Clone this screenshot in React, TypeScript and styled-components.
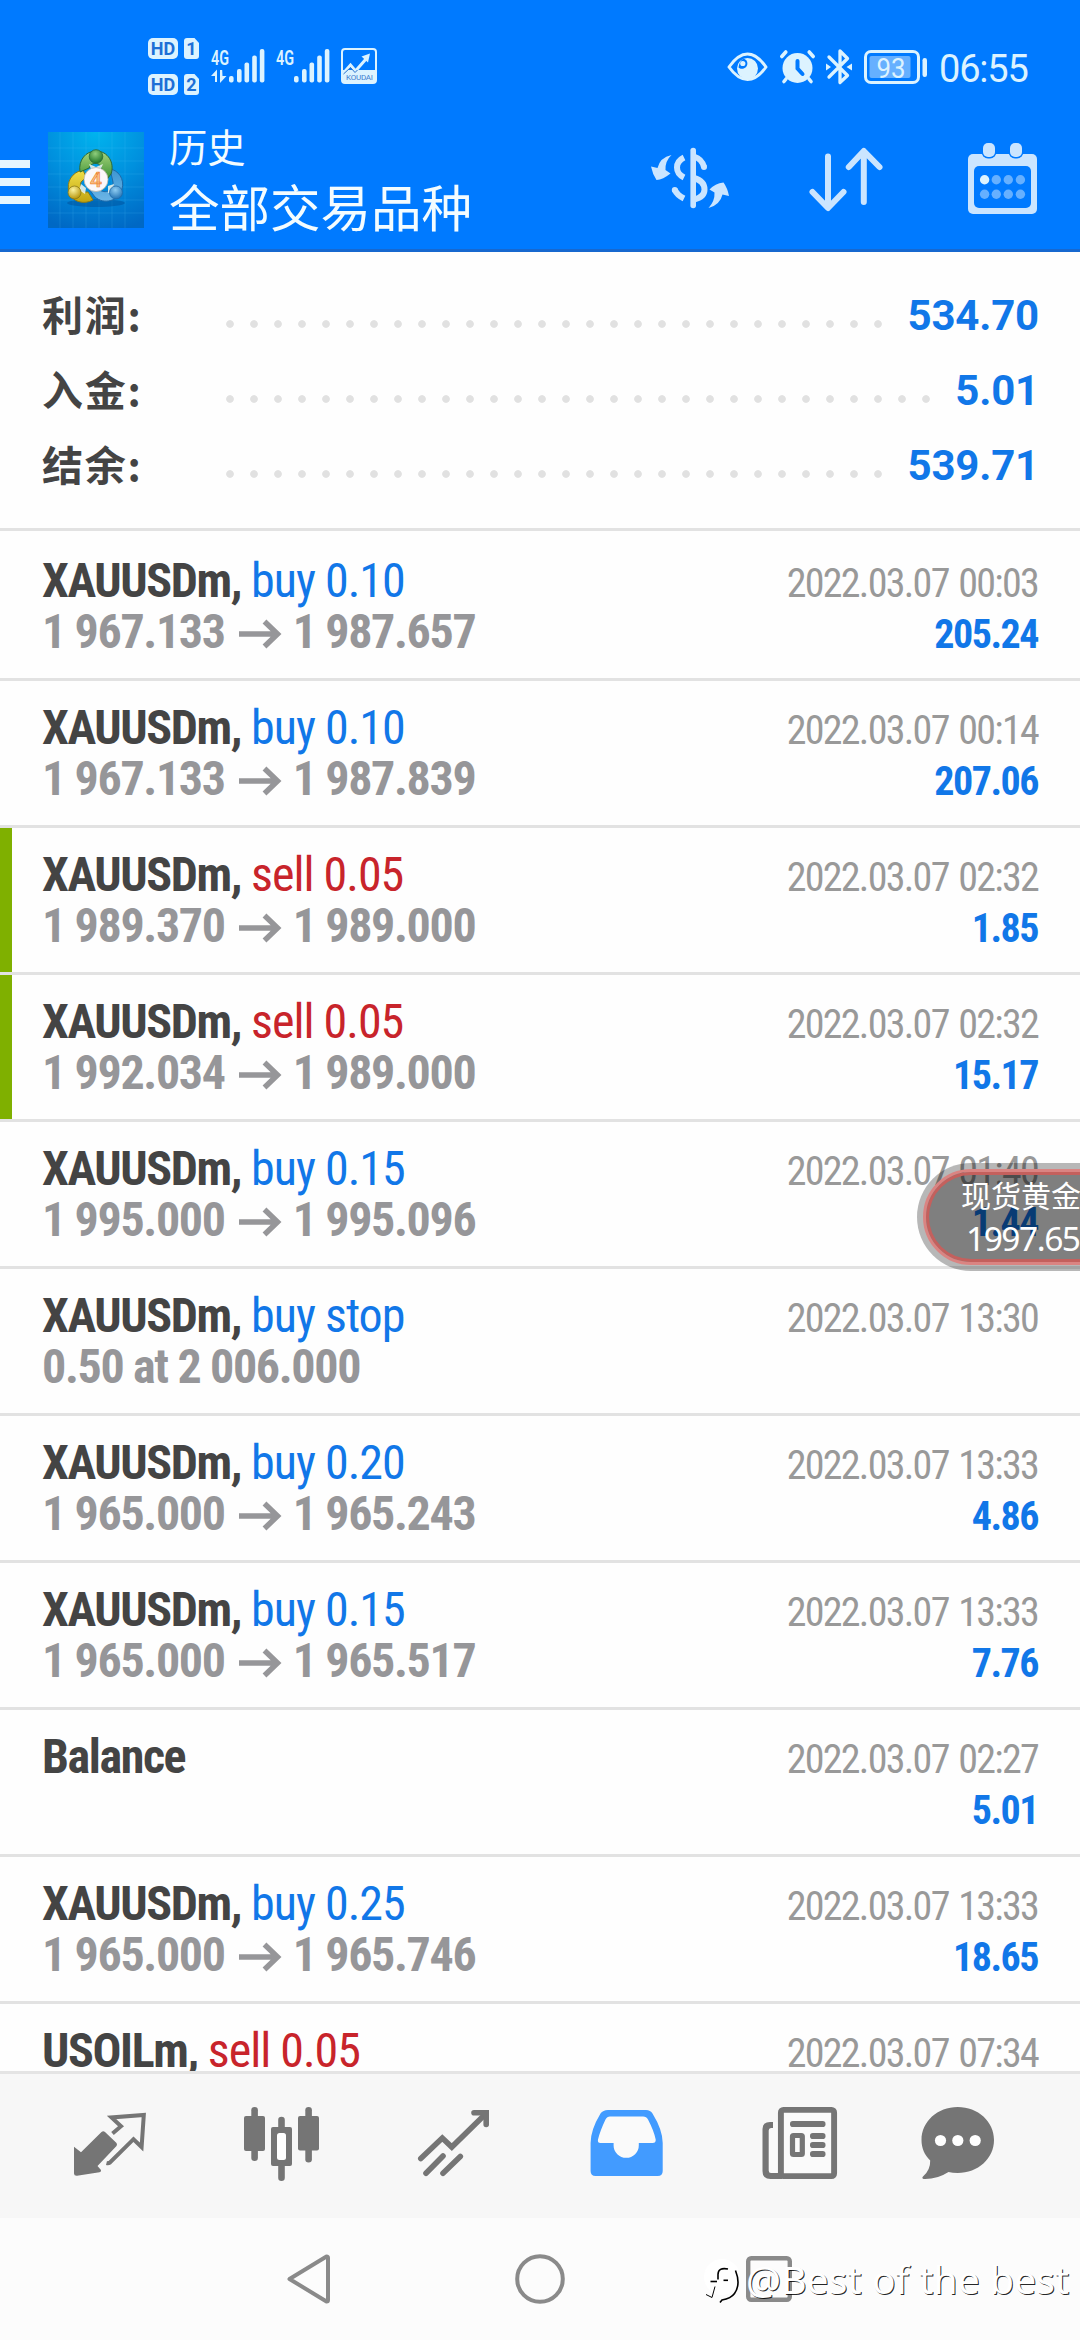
import React from "react";
import styled, { createGlobalStyle } from "styled-components";

const BLUE = "#007aff";
const ICE = "#dcf3ff";
const PALE = "#cbe5ff";
const GREY = "#757575";

const Global = createGlobalStyle`
  * { box-sizing: border-box; }
  body { margin: 0; background: #fff; }
  svg { display: block; flex: none; overflow: visible; }
`;

const Screen = styled.div`
  position: relative;
  display: flex;
  flex-direction: column;
  width: 1080px;
  height: 2340px;
  overflow: hidden;
  background: #fefefe;
  font-family: Roboto, "Noto Sans CJK SC", sans-serif;
`;

const Header = styled.header`
  flex: none;
  display: flex;
  flex-direction: column;
  height: 252px;
  background: ${BLUE};
  border-bottom: 3px solid #1768cf;
`;

const StatusBar = styled.div`
  display: flex;
  align-items: flex-start;
  justify-content: space-between;
  height: 124px;
  padding: 38px 51px 0 148px;
`;

const StatusLeft = styled.div`
  display: flex;
  align-items: flex-start;
`;

const HdColumn = styled.div`
  display: flex;
  flex-direction: column;
  gap: 15px;
`;

const HdRow = styled.div`
  display: flex;
  align-items: center;
  gap: 6px;
  height: 21px;
`;

const Badge = styled.span<{ $w: number; $cut?: boolean }>`
  display: flex;
  align-items: center;
  justify-content: center;
  width: ${(p) => p.$w}px;
  height: 21px;
  border-radius: ${(p) => (p.$cut ? "3px" : "5px")};
  background: ${ICE};
  color: #1d6fd6;
  font-size: 18px;
  font-weight: 700;
  line-height: 21px;
  clip-path: ${(p) => (p.$cut ? "polygon(0 0, 70% 0, 100% 24%, 100% 100%, 0 100%)" : "none")};
`;

const SignalGroup = styled.div`
  display: flex;
  align-items: center;
  gap: 11px;
  height: 34px;
  margin: 11px 0 0 12px;
`;

const StatusIcons = styled.div`
  display: flex;
  align-items: center;
  gap: 11.500px;
  height: 34px;
  margin-top: 12px;
`;

const Clock = styled.span`
  width: 90px;
  padding-top: 3px;
  color: ${ICE};
  font-size: 38px;
  line-height: 38px;
  letter-spacing: -1.2px;
  white-space: nowrap;
`;

const AppBar = styled.div`
  display: flex;
  align-items: flex-start;
  height: 125px;
  padding-right: 43px;
`;

const Burger = styled.button`
  display: flex;
  flex-direction: column;
  gap: 10px;
  width: 30px;
  margin: 36px 18px 0 0;
  padding: 0;
  border: 0;
  background: none;
`;

const BurgerLine = styled.span`
  height: 8px;
  background: #e6f6ff;
`;

const Logo = styled.div`
  width: 96px;
  height: 96px;
  margin-top: 8px;
`;

const Titles = styled.div`
  display: flex;
  flex-direction: column;
  margin: -2px 0 0 25px;
  color: #f3fcff;
  font-family: "Noto Sans CJK SC", sans-serif;
`;

const Caption = styled.span`
  font-size: 38.3px;
  line-height: 48px;
`;

const Title = styled.h1`
  margin: 0;
  font-size: 50.5px;
  font-weight: 400;
  line-height: 70px;
`;

const Actions = styled.div`
  display: grid;
  grid-template-columns: 79px 74px 69px;
  column-gap: 82px;
  align-items: start;
  margin: 19px 0 0 auto;

  svg:nth-child(-n + 2) {
    margin-top: 4px;
  }

  svg:nth-child(2) {
    margin-left: -3px;
  }
`;

const Summary = styled.section`
  flex: none;
  display: flex;
  flex-direction: column;
  height: 279px;
  padding: 26px 41px 0 42px;
  border-bottom: 3px solid #e2e2e2;
`;

const SummaryRow = styled.div`
  display: flex;
  align-items: center;
  height: 75px;
`;

const SummaryLabel = styled.span`
  width: 184px;
  padding-bottom: 5px;
  color: #444;
  font-family: "Noto Sans CJK SC", sans-serif;
  font-size: 41px;
  font-weight: 700;
  letter-spacing: 1.7px;
`;

const Dots = styled.div`
  flex: 1;
  height: 8px;
  margin: 16px 13px 0 0;
  background: radial-gradient(circle at 4px 4px, #e1e1e1 3.4px, transparent 4.2px) 0 0 / 24px 8px repeat-x;
`;

const SummaryValue = styled.span`
  color: #1177e8;
  font-size: 42px;
  font-weight: 700;
  letter-spacing: -0.2px;
`;

const History = styled.main`
  height: 1540px;
  overflow: hidden;
`;

const DealShell = styled.div<{ $first?: boolean }>`
  height: 147px;
  border-top: 3px solid ${(p) => (p.$first ? "transparent" : "#e2e2e2")};
`;

const DealBody = styled.div<{ $marked?: boolean }>`
  height: 144px;
  padding: 21px 42px 0 ${(p) => (p.$marked ? 30 : 42)}px;
  border-left: ${(p) => (p.$marked ? "12px solid #7fb000" : "0")};
`;

const Line = styled.div`
  display: flex;
  align-items: baseline;
  justify-content: space-between;
  height: 51px;
  font-family: "Roboto Condensed", Roboto, sans-serif;
  font-stretch: 75%;
  font-size: 48px;
  line-height: 51px;
  white-space: pre;
`;

const Symbol = styled.span`
  color: #444;
  font-weight: 700;
  letter-spacing: -1.4px;
`;

const Side = styled.span<{ $sell?: boolean }>`
  color: ${(p) => (p.$sell ? "#c8242b" : "#1177e8")};
  font-weight: 400;
  letter-spacing: -1px;
`;

const Prices = styled.span`
  display: flex;
  align-items: baseline;
  color: #969699;
  font-weight: 700;
  letter-spacing: -1.35px;
`;

const Arrow = styled.svg`
  margin: 0 12px 0 14px;
`;

const Time = styled.span`
  color: #999;
  font-size: 40px;
  letter-spacing: -1.7px;
  word-spacing: 2px;
`;

const Profit = styled.span`
  margin-left: auto;
  color: #1177e8;
  font-size: 40px;
  font-weight: 700;
  letter-spacing: -1.5px;
`;

const TabBar = styled.nav`
  flex: none;
  display: flex;
  align-items: flex-start;
  gap: 99px;
  height: 147px;
  padding: 33px 0 0 74px;
  border-top: 3px solid #e4e4e4;
  background: #f7f7f7;

  svg:last-child {
    margin-left: -15px;
  }
`;

const NavBar = styled.footer`
  flex: none;
  display: flex;
  align-items: center;
  gap: 183px;
  height: 122px;
  padding-left: 288px;
  background: #fcfcfc;
`;

const Ticker = styled.aside`
  position: absolute;
  left: 917px;
  top: 1163px;
  width: 220px;
  height: 108px;
  padding: 6px;
  border-radius: 54px;
  background: rgba(0, 0, 0, 0.28);
`;

const TickerGlow = styled.div`
  height: 96px;
  padding: 5px 0 0 35px;
  border: 3px solid #da8482;
  border-radius: 48px;
  background: rgba(0, 0, 0, 0.3);
  box-shadow: inset 0 0 0 3px #c4605d;
  color: #fff;
  white-space: nowrap;
`;

const TickerName = styled.div`
  font-family: "Noto Sans CJK SC", sans-serif;
  font-size: 30px;
  line-height: 34px;
`;

const TickerPrice = styled.div`
  padding-left: 5px;
  font-family: "Noto Sans", sans-serif;
  font-size: 33.5px;
  line-height: 54px;
  letter-spacing: -1.5px;
`;

const Watermark = styled.div`
  position: absolute;
  left: 704px;
  top: 2254px;
  display: flex;
  align-items: center;
  height: 50px;
  color: #fff;
  font-family: "Noto Sans", sans-serif;
  font-size: 39px;
  line-height: 50px;
  letter-spacing: 0.1px;
  white-space: pre;
  text-shadow: 1px 1px 0.5px rgba(0, 0, 0, 0.85);
`;

type DealData = {
  symbol: string;
  side?: string;
  sell?: boolean;
  from?: string;
  to?: string;
  time: string;
  profit?: string;
  marked?: boolean;
};

const deals: DealData[] = [
  { symbol: "XAUUSDm,", side: "buy 0.10", from: "1 967.133", to: "1 987.657", time: "2022.03.07 00:03", profit: "205.24" },
  { symbol: "XAUUSDm,", side: "buy 0.10", from: "1 967.133", to: "1 987.839", time: "2022.03.07 00:14", profit: "207.06" },
  { symbol: "XAUUSDm,", side: "sell 0.05", sell: true, from: "1 989.370", to: "1 989.000", time: "2022.03.07 02:32", profit: "1.85", marked: true },
  { symbol: "XAUUSDm,", side: "sell 0.05", sell: true, from: "1 992.034", to: "1 989.000", time: "2022.03.07 02:32", profit: "15.17", marked: true },
  { symbol: "XAUUSDm,", side: "buy 0.15", from: "1 995.000", to: "1 995.096", time: "2022.03.07 01:40", profit: "1.44" },
  { symbol: "XAUUSDm,", side: "buy stop", from: "0.50 at 2 006.000", time: "2022.03.07 13:30" },
  { symbol: "XAUUSDm,", side: "buy 0.20", from: "1 965.000", to: "1 965.243", time: "2022.03.07 13:33", profit: "4.86" },
  { symbol: "XAUUSDm,", side: "buy 0.15", from: "1 965.000", to: "1 965.517", time: "2022.03.07 13:33", profit: "7.76" },
  { symbol: "Balance", time: "2022.03.07 02:27", profit: "5.01" },
  { symbol: "XAUUSDm,", side: "buy 0.25", from: "1 965.000", to: "1 965.746", time: "2022.03.07 13:33", profit: "18.65" },
  { symbol: "USOILm,", side: "sell 0.05", sell: true, time: "2022.03.07 07:34" },
];

const summary = [
  { label: "利润:", value: "534.70" },
  { label: "入金:", value: "5.01" },
  { label: "结余:", value: "539.71" },
];

function Signal({ data }: { data?: boolean }) {
  return (
    <svg width="54" height="34" viewBox="0 0 54 34" fill={ICE}>
      <text x="0" y="15.5" fontFamily="Roboto" fontSize="21" fontWeight="600" textLength="18" lengthAdjust="spacingAndGlyphs">4G</text>
      {data && (
        <path d="M4 33V27H0L6 20.500V33ZM9 21H11.200L11.500 27H15.500L9 34Z" />
      )}
      <rect x="18" y="27" width="4.600" height="6.500" rx="2" />
      <rect x="26" y="20" width="4.600" height="13.500" rx="2" />
      <rect x="33.500" y="13.500" width="4.600" height="20" rx="2" />
      <rect x="41.200" y="6.500" width="4.600" height="27" rx="2" />
      <rect x="48.800" y="0" width="4.600" height="33.500" rx="2" />
    </svg>
  );
}

function Koudai() {
  return (
    <svg width="36" height="36" viewBox="0 0 36 36">
      <rect x="1" y="1" width="34" height="34" rx="3" fill="none" stroke={ICE} strokeWidth="2" />
      <path d="M2 22H34V34H2Z" fill={ICE} />
      <path d="M2.500 25L9.500 17L14.500 23L25 11" fill="none" stroke={ICE} strokeWidth="3" />
      <path d="M29 5.500L20.500 8.500L27 14.500Z" fill={ICE} />
      <path d="M2.500 26L9.500 19.500L14 24.500L16.500 22" fill="none" stroke="#2a72cc" strokeWidth="1" />
      <text x="5" y="32" fontFamily="Roboto" fontSize="8" fill="#3f7fd0" textLength="27">KOUDAI</text>
    </svg>
  );
}

function EyeIcon() {
  return (
    <svg width="41" height="30" viewBox="0 0 41 30">
      <path d="M2 15C9 5 15 2 20.500 2S32 5 39 15C32 25 26 27.500 20.500 27.500S9 25 2 15Z" fill="none" stroke={ICE} strokeWidth="3" strokeLinejoin="round" />
      <circle cx="20.500" cy="16.500" r="10.500" fill={ICE} />
      <path d="M16.500 6.500C21 8 21.500 13 18.500 15.500C16 17.500 13 17 11.500 15.500C12 11.500 13.500 8.500 16.500 6.500Z" fill={BLUE} />
      <circle cx="15.800" cy="11.500" r="2.600" fill={ICE} />
    </svg>
  );
}

function AlarmIcon() {
  return (
    <svg width="35" height="34" viewBox="0 0 35 34" fill={ICE} stroke={ICE} strokeLinecap="round">
      <circle cx="17.500" cy="18" r="15" stroke="none" />
      <path d="M1.800 6.500L5.800 2M33.200 6.500L29.200 2" strokeWidth="3.600" />
      <path d="M6 29L4 31.500M29 29L31 31.500" strokeWidth="3.600" />
      <path d="M17.500 11V18.500L22.500 24" fill="none" stroke={BLUE} strokeWidth="4" />
    </svg>
  );
}

function BluetoothIcon() {
  return (
    <svg width="26" height="38" viewBox="0 0 26 38">
      <path d="M3 9L21.500 27.500L14 34.500V3L21.500 10.500L3 29" fill="none" stroke={ICE} strokeWidth="3.300" strokeLinecap="round" strokeLinejoin="round" />
      <path d="M0 15.500L5 19L0 22.500ZM26 15.500L20.500 19L26 22.500Z" fill={ICE} />
    </svg>
  );
}

function BatteryIcon() {
  return (
    <svg width="64" height="34" viewBox="0 0 64 34">
      <rect x="1.500" y="1.500" width="53" height="31" rx="5.500" fill="none" stroke={ICE} strokeWidth="3" />
      <rect x="5.500" y="6" width="41" height="22" rx="2" fill="#66b0ff" />
      <rect x="58.500" y="8" width="4.500" height="19" rx="2.200" fill={ICE} />
      <text x="27" y="27.500" fill={ICE} fontFamily="Roboto" fontSize="28" textAnchor="middle" textLength="29" lengthAdjust="spacingAndGlyphs">93</text>
    </svg>
  );
}

function AppLogo() {
  return (
    <svg width="96" height="96" viewBox="0 0 96 96">
      <defs>
        <radialGradient id="sky" cx="0.5" cy="0" r="1.05">
          <stop offset="0" stopColor="#00b4ee" />
          <stop offset="0.5" stopColor="#0090de" />
          <stop offset="1" stopColor="#0068c4" />
        </radialGradient>
        <linearGradient id="green" x1="0" y1="0" x2="0" y2="1">
          <stop offset="0" stopColor="#a9d67e" />
          <stop offset="1" stopColor="#2f8a2c" />
        </linearGradient>
        <linearGradient id="yellow" x1="0" y1="0" x2="0" y2="1">
          <stop offset="0" stopColor="#f0e04a" />
          <stop offset="1" stopColor="#c2a40f" />
        </linearGradient>
        <linearGradient id="azure" x1="0" y1="0" x2="0" y2="1">
          <stop offset="0" stopColor="#3c95d2" />
          <stop offset="1" stopColor="#6cb6e6" />
        </linearGradient>
        <radialGradient id="gball" cx="0.45" cy="0.3" r="0.7">
          <stop offset="0" stopColor="#8fce7c" />
          <stop offset="1" stopColor="#1e7427" />
        </radialGradient>
        <radialGradient id="yball" cx="0.4" cy="0.3" r="0.7">
          <stop offset="0" stopColor="#fbf3a0" />
          <stop offset="1" stopColor="#b8960c" />
        </radialGradient>
        <radialGradient id="bball" cx="0.45" cy="0.3" r="0.7">
          <stop offset="0" stopColor="#8fcdf2" />
          <stop offset="1" stopColor="#2272b4" />
        </radialGradient>
      </defs>
      <rect width="96" height="96" fill="url(#sky)" />
      <path d="M12 0V96M25 0V96M38 0V96M51 0V96M64 0V96M77 0V96M0 16H96M0 29H96M0 42H96M0 55H96M0 68H96M0 81H96" stroke="#5cc4ff" strokeOpacity="0.16" strokeWidth="1" />
      <ellipse cx="48" cy="71" rx="29" ry="4" fill="#003d80" opacity="0.35" />
      <path d="M62 37C70 38 77 47 74 57C71 69 56 73 47 65L38 53L50 57C58 63 66 58 65 50Z" fill="url(#azure)" stroke="#1f69a8" strokeWidth="1" />
      <path d="M35 38C24 40 18 50 21 60C24 70 36 73 45 68L40 60C34 61 31 56 33 50L38 45Z" fill="url(#yellow)" stroke="#8a7a16" strokeWidth="1" />
      <path d="M32 40C30 28 38 19 48 19C60 19 67 31 63 42L57 50L54 38C53 30 44 29 41 36Z" fill="url(#green)" stroke="#2c6a35" strokeWidth="1" />
      <path d="M41 32L48 35L55 32L52 39H44ZM33 52L38 56L37 62L31 58ZM60 54L66 52L64 60L60 61Z" fill="#e8f2ea" opacity="0.9" />
      <circle cx="48" cy="24.500" r="6.800" fill="url(#gball)" stroke="#2c6a35" strokeWidth="0.800" />
      <circle cx="26.500" cy="60.500" r="6.500" fill="url(#yball)" stroke="#8a7a16" strokeWidth="0.800" />
      <circle cx="68" cy="60.500" r="6.500" fill="url(#bball)" stroke="#1f69a8" strokeWidth="0.800" />
      <circle cx="48" cy="47.500" r="12" fill="#fbf8fa" stroke="#b9b5a8" strokeWidth="0.800" />
      <text x="48" y="55" textAnchor="middle" fontFamily="Roboto" fontSize="21" fontWeight="500" fill="#fbc58c" stroke="#ee8636" strokeWidth="0.700">4</text>
    </svg>
  );
}

function DollarIcon() {
  return (
    <svg width="79" height="62" viewBox="651 147 79 62" fill="none" stroke={PALE}>
      <path d="M693.200 150.500V205.500" strokeWidth="5.600" strokeLinecap="round" />
      <path d="M684 157.500Q677 161 677 167.500Q677 174 684 177.500M684 198.500Q677 195 674.600 189.500" strokeWidth="6" />
      <path d="M674.800 190V190.010M704 167V167.010" strokeWidth="6" strokeLinecap="round" />
      <path d="M694 156.500Q702 159 704 167M694 178Q704.500 181 704.500 189.500Q704.500 197 694 199.500" strokeWidth="6" />
      <path d="M651 166.500L657.500 168Q660 157.500 671.500 155Q665 161 665.500 170L670.500 173.500Q663 179.500 656.500 180Q652.500 174 651 166.500Z" fill={PALE} stroke="none" />
      <path d="M729 196L722.500 194.500Q720 205 708.500 208Q715 201 714.500 192.500L709.500 189.500Q715 183.500 723.500 182.500Q727.500 188 729 196Z" fill={PALE} stroke="none" />
    </svg>
  );
}

function SortIcon() {
  return (
    <svg width="74" height="64" viewBox="809 147 74 64" fill="none" stroke={PALE} strokeWidth="6" strokeLinecap="round" strokeLinejoin="round">
      <path d="M828 156.500V207.500M812.500 192L828 208L843.500 192" />
      <path d="M863.800 202V152M848.800 167L863.800 151L879.500 167" />
    </svg>
  );
}

function CalendarIcon() {
  const cols = [984.6, 996.3, 1008.3, 1020.4];
  return (
    <svg width="69" height="71" viewBox="968 143 69 71">
      <rect x="968" y="154" width="69" height="60" rx="5" fill={PALE} />
      <rect x="974" y="166" width="57" height="42" rx="5" fill={BLUE} />
      <rect x="981.500" y="141.500" width="15" height="17" rx="6.500" fill={BLUE} />
      <rect x="1008.500" y="141.500" width="15" height="17" rx="6.500" fill={BLUE} />
      <rect x="983" y="143" width="12" height="14" rx="5" fill={PALE} />
      <rect x="1010" y="143" width="12" height="14" rx="5" fill={PALE} />
      {cols.map((x, i) => (
        <g key={x} fill="#66b0ff">
          <circle cx={x} cy="179.700" r="4.700" fill={i === 0 ? ICE : "#66b0ff"} />
          <circle cx={x} cy="194.300" r="4.700" />
        </g>
      ))}
    </svg>
  );
}

function QuotesIcon() {
  return (
    <svg width="71" height="74" viewBox="74 107 71 74">
      <path d="M74 146.700L81 152.300L101.500 132Q103.300 130.500 105 132L116.500 143Q117.500 144.700 116.500 146L97.500 166L101 170Q101.500 172 99.500 172.300L77 175.800Q74 176 74 173.500Z" fill={GREY} />
      <path d="M112.500 133.500L121 126.300L111.500 117.500L143.800 114.900L141.600 147L133.500 139.200L110 162.500Q108.500 163.500 106.500 163" fill="none" stroke={GREY} strokeWidth="4" />
    </svg>
  );
}

function CandlesIcon() {
  return (
    <svg width="75" height="74" viewBox="244 107 75 74" fill={GREY}>
      <rect x="244" y="116" width="21" height="35" rx="2" />
      <rect x="251.300" y="107" width="6.600" height="54" rx="3.300" />
      <rect x="298" y="116" width="21" height="34.500" rx="2" />
      <rect x="305.300" y="107" width="6.600" height="55.500" rx="3.300" />
      <rect x="271" y="127" width="21" height="39" rx="2" />
      <path d="M278.200 128V120Q278.200 116.700 281.500 116.700T284.800 120V128ZM278.200 165V177.700Q278.200 181 281.500 181T284.800 177.700V165Z" />
      <rect x="277" y="133" width="9" height="27" rx="2.500" fill="#fff" />
    </svg>
  );
}

function TrendIcon() {
  return (
    <svg width="73" height="74" viewBox="418 107 73 74" fill="none" stroke={GREY} strokeWidth="5.600" strokeLinecap="round">
      <path d="M420.800 158.500L442.300 138L451.800 147L485 114.500" />
      <path d="M474 112.800H486.200V124.500" strokeLinejoin="miter" />
      <path d="M426 173.300L443 156M443 173.300L460.300 156.500" />
    </svg>
  );
}

function InboxIcon() {
  return (
    <svg width="73" height="74" viewBox="590 107 73 74">
      <path d="M608 110H646Q650.500 110 652.500 113.500Q662.700 130 662.700 143V171Q662.700 176 657.700 176H595.600Q590.600 176 590.600 171V143Q590.600 130 600.500 113.500Q603 110 608 110Z" fill="#429bff" />
      <path d="M610 116.500H643Q646.500 116.500 648 119.500Q654 131 655.700 139.500Q656 143 652.500 143H638.800V145.500A12.600 12.300 0 0 1 613.600 145.500V143H600.500Q597.300 143 598 139.500Q600 131 605.500 119.500Q607 116.500 610 116.500Z" fill="#fafafa" />
    </svg>
  );
}

function NewsIcon() {
  return (
    <svg width="75" height="74" viewBox="762 107 75 74">
      <path d="M773 122H770Q762.500 122 762.500 129V171Q762.500 179 770.500 179H782V173H778V128H773Z" fill={GREY} />
      <path d="M773 128H771Q768.700 128 768.700 130.500V170.500Q768.700 173 771 173H778V122H773Z" fill="#fafafa" />
      <rect x="780.900" y="109.900" width="53.200" height="66.200" rx="2.500" fill="#fafafa" stroke={GREY} strokeWidth="5.900" />
      <g fill={GREY}>
        <rect x="790" y="121" width="35.500" height="6" rx="2.800" />
        <rect x="810" y="133" width="15.500" height="6" rx="2.800" />
        <rect x="810" y="142" width="15.500" height="6" rx="2.800" />
        <rect x="810" y="151" width="15.500" height="6" rx="2.800" />
      </g>
      <rect x="792.500" y="135.500" width="9.800" height="19" rx="1" fill="#fafafa" stroke={GREY} strokeWidth="5.200" />
    </svg>
  );
}

function ChatIcon() {
  return (
    <svg width="73" height="74" viewBox="921 107 73 74">
      <path d="M957.700 107C978 107 994 121.500 994 140S978 173 957.700 173Q952.500 173 948.500 172Q937 179.500 923.500 179Q921.500 178 923 176.500Q930.500 170 930.200 160.500C924.500 155 921.500 148 921.500 140C921.500 121.500 937.500 107 957.700 107Z" fill={GREY} />
      <circle cx="940.500" cy="140.500" r="5.600" fill="#fff" />
      <circle cx="957.800" cy="140.500" r="5.600" fill="#fff" />
      <circle cx="975.200" cy="140.500" r="5.600" fill="#fff" />
    </svg>
  );
}

function WatermarkLogo() {
  return (
    <svg width="42" height="48" viewBox="0 0 42 48">
      <circle cx="18" cy="22" r="18" fill="#fff" />
      <g fill="none" stroke="#000" strokeWidth="1.600">
        <path d="M24 14Q14 12 14 19.500V24.500" />
        <path d="M6.500 26.500H13" />
        <path d="M19.500 25.300H24" />
        <path d="M31.500 15.500Q37 29.500 30.500 38.500Q27 43.500 18 45L16 47.500" />
        <path d="M11 31.500L8 42.500L2 39.500" strokeWidth="1" />
      </g>
    </svg>
  );
}

function DealRow({ deal, first }: { deal: DealData; first: boolean }) {
  return (
    <DealShell $first={first}>
      <DealBody $marked={deal.marked}>
        <Line>
          <span>
            <Symbol>{deal.symbol}</Symbol>
            {deal.side && <Side $sell={deal.sell}>{" " + deal.side}</Side>}
          </span>
          <Time>{deal.time}</Time>
        </Line>
        {(deal.from || deal.profit) && (
          <Line>
            <Prices>
              {deal.from ?? "\u00a0"}
              {deal.to && (
                <>
                  <Arrow width="42" height="29" viewBox="0 0 42 29" fill="none" stroke="#969699" strokeWidth="5.500">
                    <path d="M0 15H38M25.500 2.500L38.500 15L25.500 27.500" />
                  </Arrow>
                  {deal.to}
                </>
              )}
            </Prices>
            {deal.profit && <Profit>{deal.profit}</Profit>}
          </Line>
        )}
      </DealBody>
    </DealShell>
  );
}

export default function App() {
  return (
    <Screen>
      <Global />
      <Header>
        <StatusBar>
          <StatusLeft>
            <HdColumn>
              {["1", "2"].map((n) => (
                <HdRow key={n}>
                  <Badge $w={30}>HD</Badge>
                  <Badge $w={15} $cut>{n}</Badge>
                </HdRow>
              ))}
            </HdColumn>
            <SignalGroup>
              <Signal data />
              <Signal />
              <Koudai />
            </SignalGroup>
          </StatusLeft>
          <StatusIcons>
            <EyeIcon />
            <AlarmIcon />
            <BluetoothIcon />
            <BatteryIcon />
            <Clock>06:55</Clock>
          </StatusIcons>
        </StatusBar>
        <AppBar>
          <Burger aria-label="menu">
            <BurgerLine />
            <BurgerLine />
            <BurgerLine />
          </Burger>
          <Logo>
            <AppLogo />
          </Logo>
          <Titles>
            <Caption>历史</Caption>
            <Title>全部交易品种</Title>
          </Titles>
          <Actions>
            <DollarIcon />
            <SortIcon />
            <CalendarIcon />
          </Actions>
        </AppBar>
      </Header>

      <Summary>
        {summary.map((s) => (
          <SummaryRow key={s.label}>
            <SummaryLabel>{s.label}</SummaryLabel>
            <Dots />
            <SummaryValue>{s.value}</SummaryValue>
          </SummaryRow>
        ))}
      </Summary>

      <History>
        {deals.map((d, i) => (
          <DealRow key={i} deal={d} first={i === 0} />
        ))}
      </History>

      <TabBar>
        <QuotesIcon />
        <CandlesIcon />
        <TrendIcon />
        <InboxIcon />
        <NewsIcon />
        <ChatIcon />
      </TabBar>

      <NavBar>
        <svg width="43" height="50" viewBox="0 0 43 50" fill="none" stroke="#8a8a8a" strokeWidth="4" strokeLinejoin="round">
          <path d="M1.500 25L38.500 2.500Q40 2.500 40 4V46Q40 47.500 38.500 47.500Z" />
        </svg>
        <svg width="50" height="50" viewBox="0 0 50 50" fill="none" stroke="#8a8a8a" strokeWidth="4">
          <circle cx="26" cy="25" r="22.800" />
        </svg>
        <svg width="46" height="46" viewBox="0 0 46 46" fill="none" stroke="#8a8a8a" strokeWidth="4.400">
          <rect x="1.200" y="2.200" width="41.600" height="41.600" rx="3" />
        </svg>
      </NavBar>

      <Ticker>
        <TickerGlow>
          <TickerName>现货黄金</TickerName>
          <TickerPrice>1997.65</TickerPrice>
        </TickerGlow>
      </Ticker>

      <Watermark>
        <WatermarkLogo />
        @Best of the best
      </Watermark>
    </Screen>
  );
}
